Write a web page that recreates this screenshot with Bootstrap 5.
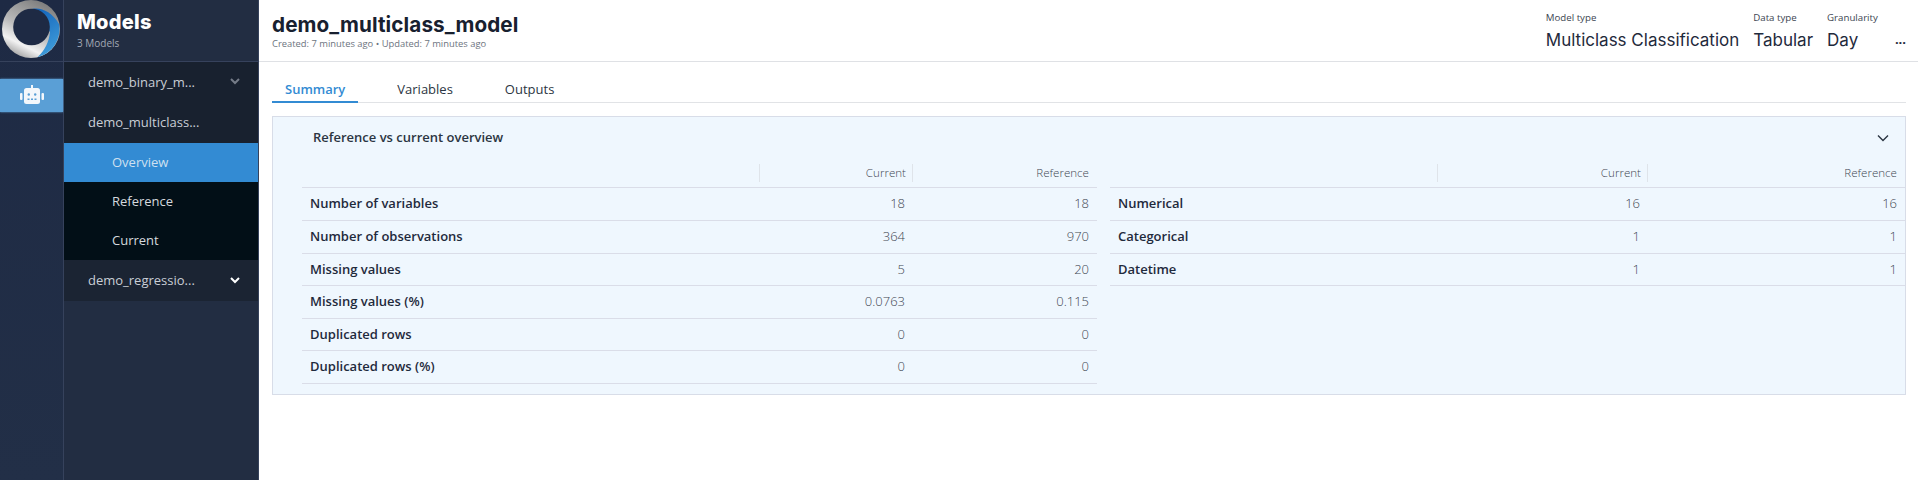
<!DOCTYPE html>
<html lang="en">
<head>
    <meta charset="UTF-8">
    <title>Models</title>
    <link href="https://cdn.jsdelivr.net/npm/bootstrap@5.3.0/dist/css/bootstrap.min.css" rel="stylesheet">
    <style>
        body {
            font-family: "Open Sans", sans-serif;
            color: #1f2a3c;
            height: 480px;
            overflow: hidden;
        }
        .app-shell { height: 480px; }
        .rail {
            width: 64px;
            background: linear-gradient(#1e2a44, #222f47);
            border-right: 1px solid #36425c;
        }
        .rail-logo { height: 62px; border-bottom: 1px solid #36425c; }
        .rail-item {
            height: 33px;
            margin-top: 17px;
            padding-left: 1px;
            background: #5a9fd6;
            box-shadow: 0 0 2px #5a9fd6;
        }
        .side {
            width: 195px;
            background: #222d42;
            border-right: 1px solid #36425c;
            color: #c9ced6;
            font-size: 13px;
        }
        .side-head { height: 62px; padding: 10px 0 0 13px; border-bottom: 1px solid #36425c; }
        .side-title { font-family: Inter, sans-serif; font-weight: 800; font-size: 20px; line-height: 24px; color: #fff; letter-spacing: .25px; }
        .side-sub { font-size: 10px; line-height: 14px; color: #a2a9b5; margin-top: 2px; }
        .tree-row {
            height: 41px;
            padding: 1px 18px 0 24px;
            background: #18212f;
        }
        .tree-row svg { margin-top: -2px; }
        .tree-row.first { height: 40px; }
        .tree-row.last { background: #1b2433; }
        .tree-sub { background: #020f17; }
        .tree-leaf { height: 39px; padding-left: 48px; color: #d5d9de; }
        .tree-leaf.active { background: #338bd3; color: #cfe0f0; }
        .main-area { min-width: 0; }
        .page-head { height: 62px; padding: 0 12px 0 13px; border-bottom: 1px solid #dfe1e5; }
        .head-left { padding-top: 13px; }
        .page-title { font-family: Inter, sans-serif; font-weight: 700; font-size: 20.7px; line-height: 23px; letter-spacing: .1px; margin: 0; color: #18202f; }
        .page-meta { font-size: 9.4px; line-height: 14px; margin-top: .5px; color: #6d7480; }
        .fact-label { font-size: 9.7px; line-height: 14px; color: #3c4552; }
        .fact-value { font-family: Inter, sans-serif; font-weight: 400; font-size: 17px; line-height: 24px; margin-top: 2.5px; color: #1f2a3c; white-space: nowrap; }
        .facts { gap: 14px; margin-top: 11px; }
        .more-dots { font-weight: 700; font-size: 13px; line-height: 14px; margin: 21px 0 0 3px; color: #1f2a3c; }
        .tab-strip { margin: 13px 12px 0 13px; height: 28px; border-bottom: 1px solid #e1e3e6; font-size: 13px; }
        .tab-link { padding: 0 13px; height: 28px; line-height: 28px; margin-right: 26px; color: #2b3542; }
        .tab-link.active { color: #338bd3; font-weight: 600; border-bottom: 2px solid #338bd3; }
        .overview {
            margin: 13px 12px 0 13px;
            height: 279px;
            background: #eff7fe;
            border: 1px solid #d8dde8;
        }
        .overview-head { height: 42px; padding: 0 16px 1px 40px; font-size: 13px; font-weight: 600; color: #2b3542; }
        .stat-grid { gap: 13px; padding-left: 29px; }
        .stat-table { table-layout: fixed; font-size: 13px; margin: 0; --bs-table-bg: transparent; width: 795px; flex: none; }
        .stat-table th, .stat-table td { padding: 0 8px 0 7px; border-color: #dadde8; border-bottom-width: 1px; vertical-align: middle; }
        .stat-table thead th { height: 28px; padding-bottom: 0; font-weight: 300; font-size: 11.6px; color: #3f4753; }
        .stat-table tbody tr { height: 33px; }
        .stat-table tbody tr:nth-child(3), .stat-table tbody tr:nth-child(5) { height: 32px; }
        .stat-table tbody td { font-weight: 300; color: #3f4753; }
        .stat-table tbody th { font-weight: 600; color: #1f2a3c; padding-left: 8px; }
        .stat-table tbody tr:nth-child(3) > *, .stat-table tbody tr:nth-child(5) > * { padding-top: 1px; }
        .sep { border-right: 1px solid #dfe4ea; }
        .stat-table thead th > span { display: block; line-height: 18px; height: 18px; padding-right: 6px; margin-right: -8px; }
        .col-a1 { width: 458px; } .col-a2 { width: 153px; }
        .col-b1 { width: 328px; } .col-b2 { width: 210px; }
    </style>
</head>
<body>
    <div class="app-shell d-flex">
        <div class="rail flex-shrink-0">
            <div class="rail-logo d-flex align-items-start">
                <svg width="63" height="60" viewBox="0 0 63 60">
                    <defs>
                        <linearGradient id="ringGray" x1="0.8" y1="0" x2="0.3" y2="1">
                            <stop offset="0" stop-color="#757575"/>
                            <stop offset=".55" stop-color="#bcbcbc"/>
                            <stop offset=".8" stop-color="#f2f2f2"/>
                            <stop offset="1" stop-color="#a0a0a0"/>
                        </linearGradient>
                        <linearGradient id="ringBlue" x1="0.3" y1="0" x2="0.7" y2="1">
                            <stop offset="0" stop-color="#1565bb"/>
                            <stop offset="1" stop-color="#41a0dc"/>
                        </linearGradient>
                    </defs>
                    <circle cx="31" cy="29" r="29" fill="url(#ringGray)"/>
                    <path d="M32 9C41 7 52 12 59 24A29 29 0 0 1 37.5 57.3C45 50 49 42 50 32L40 20Z" fill="url(#ringBlue)"/>
                    <circle cx="31.5" cy="27" r="18.3" fill="#1e2a44"/>
                </svg>
            </div>
            <div class="rail-item d-flex align-items-center justify-content-center">
                <svg width="26" height="26" viewBox="0 0 26 26">
                    <rect x="12" y="2" width="2" height="4" fill="#f3f7fb"/>
                    <rect x="5" y="5" width="16" height="16" rx="2.5" fill="#f3f7fb"/>
                    <rect x="1" y="10" width="2.5" height="7" rx="1" fill="#f3f7fb"/>
                    <rect x="22.5" y="10" width="2.5" height="7" rx="1" fill="#f3f7fb"/>
                    <circle cx="9.8" cy="11.5" r="1.2" fill="#5a9fd6"/>
                    <circle cx="16.2" cy="11.5" r="1.2" fill="#5a9fd6"/>
                    <rect x="8.5" y="15.5" width="2" height="1.5" fill="#5a9fd6"/>
                    <rect x="12" y="15.5" width="2" height="1.5" fill="#5a9fd6"/>
                    <rect x="15.5" y="15.5" width="2" height="1.5" fill="#5a9fd6"/>
                </svg>
            </div>
        </div>
        <div class="side flex-shrink-0">
            <div class="side-head">
                <div class="side-title">Models</div>
                <div class="side-sub">3 Models</div>
            </div>
            <div class="tree-row first d-flex align-items-center justify-content-between">
                <span>demo_binary_m...</span>
                <svg width="10" height="7" viewBox="0 0 10 7"><path d="M1 1l4 4 4-4" fill="none" stroke="#757c88" stroke-width="2"/></svg>
            </div>
            <div class="tree-row d-flex align-items-center">
                <span>demo_multiclass...</span>
            </div>
            <div class="tree-sub">
                <div class="tree-leaf active d-flex align-items-center">Overview</div>
                <div class="tree-leaf d-flex align-items-center">Reference</div>
                <div class="tree-leaf d-flex align-items-center">Current</div>
            </div>
            <div class="tree-row last d-flex align-items-center justify-content-between">
                <span>demo_regressio...</span>
                <svg width="10" height="7" viewBox="0 0 10 7"><path d="M1 1l4 4 4-4" fill="none" stroke="#fff" stroke-width="2"/></svg>
            </div>
        </div>
        <div class="main-area flex-grow-1">
            <div class="page-head d-flex justify-content-between">
                <div class="head-left">
                    <h1 class="page-title">demo_multiclass_model</h1>
                    <div class="page-meta">Created: 7 minutes ago • Updated: 7 minutes ago</div>
                </div>
                <div class="d-flex facts">
                    <div><div class="fact-label">Model type</div><div class="fact-value">Multiclass Classification</div></div>
                    <div><div class="fact-label">Data type</div><div class="fact-value">Tabular</div></div>
                    <div><div class="fact-label">Granularity</div><div class="fact-value">Day</div></div>
                    <div class="more-dots">...</div>
                </div>
            </div>
            <div class="tab-strip d-flex">
                <div class="tab-link active">Summary</div>
                <div class="tab-link">Variables</div>
                <div class="tab-link">Outputs</div>
            </div>
            <div class="overview">
                <div class="overview-head d-flex align-items-center justify-content-between">
                    <span>Reference vs current overview</span>
                    <svg width="12" height="8" viewBox="0 0 12 8"><path d="M1 1.5l5 5 5-5" fill="none" stroke="#2b3542" stroke-width="1.4"/></svg>
                </div>
                <div class="stat-grid d-flex">
                    <table class="table stat-table">
                        <colgroup><col class="col-a1"><col class="col-a2"><col></colgroup>
                        <thead>
                            <tr><th><span class="sep"></span></th><th class="text-end"><span class="sep">Current</span></th><th class="text-end">Reference</th></tr>
                        </thead>
                        <tbody>
                            <tr><th>Number of variables</th><td class="text-end">18</td><td class="text-end">18</td></tr>
                            <tr><th>Number of observations</th><td class="text-end">364</td><td class="text-end">970</td></tr>
                            <tr><th>Missing values</th><td class="text-end">5</td><td class="text-end">20</td></tr>
                            <tr><th>Missing values (%)</th><td class="text-end">0.0763</td><td class="text-end">0.115</td></tr>
                            <tr><th>Duplicated rows</th><td class="text-end">0</td><td class="text-end">0</td></tr>
                            <tr><th>Duplicated rows (%)</th><td class="text-end">0</td><td class="text-end">0</td></tr>
                        </tbody>
                    </table>
                    <table class="table stat-table align-self-start">
                        <colgroup><col class="col-b1"><col class="col-b2"><col></colgroup>
                        <thead>
                            <tr><th><span class="sep"></span></th><th class="text-end"><span class="sep">Current</span></th><th class="text-end">Reference</th></tr>
                        </thead>
                        <tbody>
                            <tr><th>Numerical</th><td class="text-end">16</td><td class="text-end">16</td></tr>
                            <tr><th>Categorical</th><td class="text-end">1</td><td class="text-end">1</td></tr>
                            <tr><th>Datetime</th><td class="text-end">1</td><td class="text-end">1</td></tr>
                        </tbody>
                    </table>
                </div>
            </div>
        </div>
    </div>
    <script src="https://cdn.jsdelivr.net/npm/bootstrap@5.3.0/dist/js/bootstrap.bundle.min.js"></script>
</body>
</html>
